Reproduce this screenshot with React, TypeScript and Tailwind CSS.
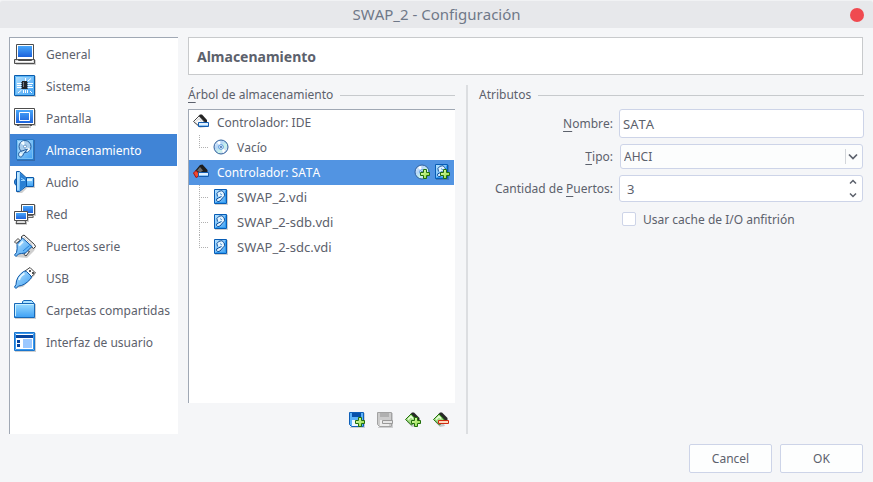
import { useId, useState } from "react";
import type { ReactNode } from "react";

type IconProps = { children: ReactNode; size?: "sm" | "lg" };

function Icon({ children, size = "lg" }: IconProps) {
  return size === "lg" ? (
    <svg viewBox="0 0 24 24" className="size-6 shrink-0" aria-hidden="true">
      {children}
    </svg>
  ) : (
    <svg viewBox="0 0 16 16" className="size-4 shrink-0" aria-hidden="true">
      {children}
    </svg>
  );
}

function Gradients() {
  return (
    <svg className="absolute size-0" aria-hidden="true">
      <defs>
        <linearGradient id="screen" x1="0" y1="0" x2="0" y2="1">
          <stop offset="0" stopColor="#48a6fa" />
          <stop offset="1" stopColor="#1c62dc" />
        </linearGradient>
        <linearGradient id="light" x1="0" y1="0" x2="1" y2="1">
          <stop offset="0" stopColor="#b9e4ff" />
          <stop offset="1" stopColor="#3b9df2" />
        </linearGradient>
        <linearGradient id="folder" x1="0" y1="0" x2="0" y2="1">
          <stop offset="0" stopColor="#9cdcff" />
          <stop offset="1" stopColor="#3da0f5" />
        </linearGradient>
        <linearGradient id="plus" x1="0" y1="0" x2="1" y2="1">
          <stop offset="0" stopColor="#e9ffb8" />
          <stop offset="1" stopColor="#86d83a" />
        </linearGradient>
        <linearGradient id="disc" x1="0" y1="0" x2="1" y2="1">
          <stop offset="0" stopColor="#f2f8ff" />
          <stop offset="0.35" stopColor="#b5d5f7" />
          <stop offset="0.6" stopColor="#c8f3ea" />
          <stop offset="1" stopColor="#d8c9fb" />
        </linearGradient>
      </defs>
    </svg>
  );
}

const GeneralIcon = () => (
  <Icon>
    <path d="M4 18H23V23H3" fill="#00000030" />
    <path d="M3.5 2.5H20.5V17.5H3.5Z" fill="#fff" stroke="#4d4d4d" />
    <path d="M5 4H19V15H5Z" fill="url(#screen)" />
    <path d="M1.5 17.5H4.5L5.5 18.5H18.5L19.5 17.5H21.5V21.5H1.5Z" fill="#d7d7d7" stroke="#4d4d4d" />
    <path d="M3 19.5H20" stroke="#fff" />
  </Icon>
);

const SystemIcon = () => (
  <Icon>
    <path d="M2 2H23V23H2Z" fill="#00000030" />
    <path d="M1.5 1.5H21.5V21.5H1.5Z" fill="url(#light)" stroke="#0a5cad" />
    <path d="M2.5 2.5H20.5V20.5H2.5Z" fill="none" stroke="#5bb6f7" />
    <path
      d="M12.5 4V7M15 7L18 4.5M4 9.5H8M4 11.5H8M4 13.5H8M15 9.5H20M15 11.5H19M15 13.5H20M5 19L8.5 16M10.5 16V19M12.5 16V19M14.5 16V19M17 17L19 19"
      fill="none"
      stroke="#fff"
    />
    <path d="M9 7H14V15H9Z" fill="#20242a" />
    <path d="M10 8H11V13H10Z" fill="#747b84" />
    <path d="M8.5 8V15M14.5 8V15" stroke="#4d555e" strokeDasharray="1 1" />
  </Icon>
);

const DisplayIcon = () => (
  <Icon>
    <path d="M2 4H23V20H18V22H6V20H2Z" fill="#00000030" />
    <path d="M1.5 2.5H21.5V18.5H1.5Z" fill="#fff" stroke="#4d4d4d" />
    <path d="M3 4H20V17H3Z" fill="url(#screen)" />
    <path d="M6.5 6.5H16.5V14.5H6.5Z" fill="none" stroke="#fff" />
    <path d="M4 19.5H19M7 21H16" fill="none" stroke="#555" />
    <path d="M6 20H17" stroke="#eee" />
  </Icon>
);

const StorageIcon = () => (
  <Icon>
    <path d="M4 2H22V23H4Z" fill="#00000030" />
    <path d="M3.5 1.5H20.5V21.5H3.5Z" fill="url(#light)" stroke="#2679c8" />
    <path d="M4.5 2.5H19.5V20.5H4.5Z" fill="none" stroke="#79c0f4" />
    <circle cx="12" cy="8.5" r="6" fill="#a9cdec" stroke="#245c9c" />
    <path d="M12 8.5L7.5 5A6 6 0 0 1 11 3ZM12 8.5L17.3 11A6 6 0 0 1 14 14Z" fill="#f2fbff" />
    <circle cx="12" cy="8.5" r="1.5" fill="#fff" stroke="#3979b9" strokeWidth="0.7" />
    <path d="M14.5 11L9 13C7 13.5 5.5 14.5 5.5 16.3C5.5 19 8 20 9.5 18C10.5 16.5 10.5 15.5 12 14Z" fill="#c5e6fb" stroke="#245c9c" />
    <circle cx="7.8" cy="16.5" r="1" fill="#fff" />
  </Icon>
);

const AudioIcon = () => (
  <Icon>
    <path d="M4 2L9 3L14 8L22 8V18L14 18L9 23H4Z" fill="#00000030" />
    <path d="M3.5 8.5Q1.5 9 1.5 12Q1.5 15 3.5 15.5" fill="#318ae0" stroke="#0b57a8" />
    <path d="M12.5 7.5H20.5V16.5H12.5Z" fill="url(#folder)" stroke="#0b57a8" />
    <path d="M14 9H19V11H14Z" fill="#dff3ff" />
    <path d="M3.5 1.5H6.5L13.5 8V16L6.5 21.5H3.5Z" fill="url(#light)" stroke="#0b57a8" />
    <path d="M7 2.5L13 8.5V15.5L7 20.5Z" fill="#2a80d4" />
    <path d="M5 3V20" stroke="#d7f2ff" />
    <path d="M8 8L12 10.5M8 10.5H12" stroke="#9cd6ff" />
  </Icon>
);

const NetworkIcon = () => (
  <Icon>
    <path d="M9 3H23V14H21V16H12ZM2 11H16V20H14V23H3Z" fill="#00000030" />
    <path d="M8.5 2.5H21.5V12.5H8.5Z" fill="#fff" stroke="#4d4d4d" />
    <path d="M10 4H20V11H10Z" fill="url(#screen)" />
    <path d="M15 13.5H20V15.5H15" fill="#ddd" stroke="#666" />
    <path d="M1.5 9.5H14.5V18.5H1.5Z" fill="#fff" stroke="#4d4d4d" />
    <path d="M3 11H13V17H3Z" fill="url(#screen)" />
    <path d="M4 18.5H12L13 21.5H3Z" fill="#ddd" stroke="#4d4d4d" />
  </Icon>
);

const SerialIcon = () => (
  <Icon>
    <path d="M3 23L4 13L12 5L23 13L21 17L14 24Z" fill="#00000030" />
    <path d="M7 6.5L3 9.5L1.5 8L5 4.5Z" fill="#f3f3f3" stroke="#444" />
    <path d="M16.5 17.5L13 22L11 20.5L14 16.5Z" fill="#f3f3f3" stroke="#444" />
    <path d="M8.5 2.5L11 1L21.5 10.5L22.5 12.5L20.5 14.5L8.5 4.5Z" fill="#f8f8f8" stroke="#333" />
    <path d="M11 3.5L20 11.5" stroke="#999" strokeDasharray="1 1" />
    <path
      d="M9.5 4L19 12.5L12.5 19Q8 19.5 5.5 20L3 22.5L1.5 21L3.5 18.5Q4.5 15 4 10.5Z"
      fill="url(#light)"
      stroke="#0b57a8"
      strokeLinejoin="round"
    />
    <path d="M6 11.5L10 7.5" stroke="#e4f6ff" strokeWidth="2" />
    <path d="M10 17L16.5 11.5" stroke="#237fd5" />
  </Icon>
);

const UsbIcon = () => (
  <Icon>
    <path d="M3 22L6 15L16 6L22 9L10 21Z" fill="#00000030" />
    <path d="M12 5L17 1.5L22.5 7L18 11Z" fill="#fff" stroke="#444" strokeLinejoin="round" />
    <path d="M16 4H18V6H16ZM19 6H21V8H19Z" fill="#555" />
    <path
      d="M10.5 5.5Q12 4.5 13.5 5.5L18 10Q19 11.5 17.5 13Q11 20 5.5 20L3 22.5L1.5 21L3 18.5Q3 11 10.5 5.5Z"
      fill="url(#light)"
      stroke="#0b57a8"
    />
    <path d="M6 14Q7 10 11.5 7.5" fill="none" stroke="#e4f6ff" strokeWidth="2" />
  </Icon>
);

const FolderIcon = () => (
  <Icon>
    <path d="M2 6H23V21H2Z" fill="#00000030" />
    <path d="M9.5 6V3.5L11 2.5H18.5L20.5 4.5V7" fill="#aee3ff" stroke="#1668b8" />
    <path d="M1.5 5.5H21.5V19.5H1.5Z" fill="url(#folder)" stroke="#1668b8" />
    <path d="M2.5 18V6.5H20.5" fill="none" stroke="#caf0ff" />
  </Icon>
);

const InterfaceIcon = () => (
  <Icon>
    <path d="M2 3H23V22H2Z" fill="#00000030" />
    <path d="M1.5 2.5H21.5V20.5H1.5Z" fill="#fff" stroke="#1976cf" />
    <path d="M2.5 3.5H20.5V19.5H2.5Z" fill="none" stroke="#3b98ee" />
    <path d="M3 5H20V8H3Z" fill="#0746a0" />
    <path d="M4 10H7V13H4ZM4 14H7V17H4Z" fill="#0746a0" />
    <path d="M10 9H19V18H10Z" fill="#9bc8ff" />
  </Icon>
);

const IdeIcon = () => (
  <Icon size="sm">
    <path d="M1 9L7 14L13 13L8 8Z" fill="#00000030" />
    <path d="M5.5 2L7 0.5H9L14 6V8.5H11Z" fill="#242424" />
    <path d="M0.5 7.5L6 2L11.5 8L6.5 12.5Z" fill="#fafafa" stroke="#4a4a4a" />
    <path d="M3 7.5L6 4.5L8.5 7.5" fill="none" stroke="#d0d0d0" />
    <path d="M5.5 8.5H15.5V12.5H5.5Z" fill="#dff0ff" stroke="#145cae" />
    <path d="M6 11.5H15" stroke="#8cc4f5" />
  </Icon>
);

const SataIcon = () => (
  <Icon size="sm">
    <path d="M2 7L7 1L9.5 0.5L14.5 6V9H8L6 11.5Z" fill="#1d1d1d" />
    <path d="M4 6.5L7 3L10 6.5L7 8.5Z" fill="#6c6c6c" />
    <path d="M0.5 9L3 6.5L6.5 10L5 12.5L3 13.5Z" fill="#f0492f" stroke="#a01313" />
    <path d="M5.5 8.5H15.5V12.5H5.5Z" fill="#dff0ff" stroke="#145cae" />
    <path d="M6 11.5H15" stroke="#8cc4f5" />
  </Icon>
);

const PlusMark = () => (
  <path
    d="M9.5 5.5H12.5V8.5H15.5V11.5H12.5V14.5H9.5V11.5H6.5V8.5H9.5Z"
    fill="url(#plus)"
    stroke="#216e0c"
  />
);

const DiscShape = () => (
  <>
    <circle cx="8" cy="8" r="7" fill="url(#disc)" stroke="#2f5f9c" />
    <path d="M8 8L4 3.5L7 2ZM8 8L12.5 11.5L10 14Z" fill="#fff" />
    <circle cx="8" cy="8" r="2.3" fill="#fff" stroke="#4d8fdc" />
    <circle cx="8" cy="8" r="0.9" fill="#1b56a0" />
  </>
);

const DiskShape = () => (
  <>
    <path d="M2 15.5H14.5V1" fill="none" stroke="#00000030" />
    <path d="M1.5 0.5H13.5V14.5H1.5Z" fill="url(#light)" stroke="#075cb5" />
    <path d="M2.5 13.5H12.5V1.5" fill="none" stroke="#2f9bf0" />
    <path
      d="M4.5 7.5A3.8 3.8 0 1 1 9.5 9L7 12Q4.5 13.5 3.5 11.5Q3 9.5 5.5 9L8.5 7.5"
      fill="#e3f4ff"
      stroke="#0c4e9b"
    />
    <path d="M7 4.5L9 6" stroke="#4d94d8" />
  </>
);

const SaveShape = ({ muted }: { muted?: boolean }) => (
  <>
    <path d="M1 15.5H15.5V1" fill="none" stroke="#00000028" />
    <path
      d="M0.5 0.5H14.5V14.5H2.5L0.5 12.5Z"
      fill={muted ? "#cccccc" : "#5ab2f8"}
      stroke={muted ? "#a2a2a2" : "#0f5fb8"}
    />
    <path d="M3 1H12V5H3Z" fill={muted ? "#b0b0b0" : "#0750a8"} />
    <path d="M3 8H12V14H3Z" fill={muted ? "#ededed" : "#eef7ff"} />
  </>
);

const ControllerShape = () => (
  <>
    <path d="M2 10L7 15L12 14L9 8Z" fill="#00000030" />
    <path d="M5.5 2L7 0.5H9L14.5 6V9H11Z" fill="#282828" />
    <path d="M0.5 7.5L6 2L11.5 8L6.5 13Z" fill="#a5dd86" stroke="#216e0c" />
    <path d="M3 7.5L6 4.5L8 6.5" fill="none" stroke="#e8ffda" strokeWidth="1.5" />
  </>
);

const categories = [
  { label: "General", icon: <GeneralIcon /> },
  { label: "Sistema", icon: <SystemIcon /> },
  { label: "Pantalla", icon: <DisplayIcon /> },
  { label: "Almacenamiento", icon: <StorageIcon /> },
  { label: "Audio", icon: <AudioIcon /> },
  { label: "Red", icon: <NetworkIcon /> },
  { label: "Puertos serie", icon: <SerialIcon /> },
  { label: "USB", icon: <UsbIcon /> },
  { label: "Carpetas compartidas", icon: <FolderIcon /> },
  { label: "Interfaz de usuario", icon: <InterfaceIcon /> },
];

function Legend({ children }: { children: ReactNode }) {
  return (
    <div className="flex h-5 items-center gap-[7px]">
      <h2>{children}</h2>
      <span className="h-px flex-1 bg-[#c7cacd]" />
    </div>
  );
}

function Key({ children }: { children: ReactNode }) {
  return <span className="underline underline-offset-[3px]">{children}</span>;
}

function Caption({ children }: { children: ReactNode }) {
  return <span className="flex-1 pt-[2px] text-left">{children}</span>;
}

function Branch({ last }: { last?: boolean }) {
  return (
    <svg viewBox="0 0 12 25" className="h-[25px] w-3 shrink-0" aria-hidden="true">
      <path d={last ? "M0.5 0V13" : "M0.5 0V25"} stroke="#b0b0b0" strokeDasharray="1 1" />
      <path d="M2 12.5H10" stroke="#b0b0b0" strokeDasharray="1 1" />
    </svg>
  );
}

function TreeLeaf({ icon, children, last }: { icon: ReactNode; children: ReactNode; last?: boolean }) {
  return (
    <li className="flex h-[25px] pl-[10px]">
      <Branch last={last} />
      <span className="flex items-center gap-2 pb-px pl-[2px]">
        <Icon size="sm">{icon}</Icon>
        {children}
      </span>
    </li>
  );
}

function DiskLeaf({ name, last }: { name: string; last?: boolean }) {
  return (
    <TreeLeaf icon={<DiskShape />} last={last}>
      <span className="text-[13px]">{name}</span>
    </TreeLeaf>
  );
}

function StorageTree() {
  return (
    <ul className="flex-1 border-l border-t border-[#a0a8b4] bg-white">
      <li>
        <div className="flex h-[25px] items-center gap-2 pb-px pl-1">
          <IdeIcon />
          <Caption>Controlador: IDE</Caption>
        </div>
        <ul>
          <TreeLeaf icon={<DiscShape />} last>
            <Caption>Vacío</Caption>
          </TreeLeaf>
        </ul>
      </li>
      <li>
        <div className="mr-px flex h-[25px] items-center gap-2 bg-[#5294e2] pb-px pl-1 pr-1 text-white">
          <SataIcon />
          <Caption>Controlador: SATA</Caption>
          <span className="flex gap-1">
            <button type="button" aria-label="Añadir unidad óptica">
              <Icon size="sm">
                <DiscShape />
                <PlusMark />
              </Icon>
            </button>
            <button type="button" aria-label="Añadir disco duro">
              <Icon size="sm">
                <DiskShape />
                <PlusMark />
              </Icon>
            </button>
          </span>
        </div>
        <ul>
          <DiskLeaf name="SWAP_2.vdi" />
          <DiskLeaf name="SWAP_2-sdb.vdi" />
          <DiskLeaf name="SWAP_2-sdc.vdi" last />
        </ul>
      </li>
    </ul>
  );
}

function StorageToolbar() {
  return (
    <div className="flex h-[31px] items-center justify-end gap-3 pr-[6px] pt-[3px]">
      <button type="button" aria-label="Añadir conexión">
        <Icon size="sm">
          <SaveShape />
          <PlusMark />
        </Icon>
      </button>
      <button type="button" aria-label="Eliminar conexión" disabled>
        <Icon size="sm">
          <SaveShape muted />
          <path d="M5.5 8.5H15.5V11.5H5.5Z" fill="#e6e6e6" stroke="#999" />
        </Icon>
      </button>
      <button type="button" aria-label="Añadir controlador">
        <Icon size="sm">
          <ControllerShape />
          <PlusMark />
        </Icon>
      </button>
      <button type="button" aria-label="Eliminar controlador">
        <Icon size="sm">
          <ControllerShape />
          <path d="M5.5 8.5H15.5V11.5H5.5Z" fill="#ffd8bc" stroke="#d0290f" />
        </Icon>
      </button>
    </div>
  );
}

function Attributes() {
  const id = useId();
  const [name, setName] = useState("SATA");
  const [ports, setPorts] = useState(3);
  return (
    <section className="-mr-px min-w-0 flex-1">
      <Legend>Atributos</Legend>
      <div className="mt-1 grid grid-cols-[134px_1fr] items-center gap-[6px]">
        <label htmlFor={`${id}-name`} className="pt-px text-right">
          <Key>N</Key>ombre:
        </label>
        <input
          id={`${id}-name`}
          value={name}
          onChange={(e) => setName(e.target.value)}
          className="h-[29px] w-full min-w-0 rounded-[3px] border border-[#cdd4e8] bg-white px-[3px] text-[13px] outline-none"
        />
        <label htmlFor={`${id}-type`} className="pt-px text-right">
          <Key>T</Key>ipo:
        </label>
        <div className="grid px-px">
          <select
            id={`${id}-type`}
            className="col-start-1 row-start-1 h-[25px] w-full appearance-none rounded-[3px] border border-[#cdd4e8] bg-[#fcfdfd] px-[3px] pt-px outline-none"
          >
            <option>AHCI</option>
          </select>
          <span className="pointer-events-none col-start-1 row-start-1 mr-[5px] flex items-center self-center justify-self-end border-l border-[#d3d6da] pl-[2px]">
            <svg viewBox="0 0 10 15" className="h-[15px] w-[10px]" aria-hidden="true">
              <path d="M1 5.5L5 9.5L9 5.5" fill="none" stroke="#5c616c" strokeWidth="1.7" />
            </svg>
          </span>
        </div>
        <label htmlFor={`${id}-ports`} className="pt-px text-right">
          Cantidad de <Key>P</Key>uertos:
        </label>
        <div className="mr-px flex h-[27px] rounded-[3px] border border-[#cdd4e8] bg-white">
          <input
            id={`${id}-ports`}
            inputMode="numeric"
            value={ports}
            onChange={(e) => setPorts(Number(e.target.value) || 0)}
            className="min-w-0 flex-1 bg-transparent pl-[7px] text-[13px] outline-none"
          />
          <span className="flex w-[18px] flex-col">
            <button
              type="button"
              aria-label="Aumentar"
              onClick={() => setPorts(ports + 1)}
              className="flex flex-1 items-center justify-center"
            >
              <svg viewBox="0 0 8 6" className="h-[6px] w-2" aria-hidden="true">
                <path d="M1 4.5L4 1.5L7 4.5" fill="none" stroke="#5c616c" strokeWidth="1.5" />
              </svg>
            </button>
            <button
              type="button"
              aria-label="Reducir"
              onClick={() => setPorts(Math.max(1, ports - 1))}
              className="flex flex-1 items-center justify-center"
            >
              <svg viewBox="0 0 8 6" className="h-[6px] w-2" aria-hidden="true">
                <path d="M1 1.5L4 4.5L7 1.5" fill="none" stroke="#5c616c" strokeWidth="1.5" />
              </svg>
            </button>
          </span>
        </div>
        <label className="col-start-2 flex h-[22px] items-center gap-[7px] pl-[3px]">
          <input
            type="checkbox"
            className="size-[14px] appearance-none rounded-[2px] border border-[#cdd4e8] bg-white checked:bg-[#5294e2]"
          />
          <Caption>Usar cache de I/O anfitrión</Caption>
        </label>
      </div>
    </section>
  );
}

export default function App() {
  const [selected, setSelected] = useState("Almacenamiento");
  return (
    <div className="flex min-h-screen flex-col bg-[#f5f6f8] font-['Noto_Sans',sans-serif] text-[12px] leading-5 text-[#5c616c] [font-kerning:none]">
      <Gradients />
      <header className="grid h-7 grid-cols-[1fr_auto_1fr] items-center rounded-t-[3px] border-t border-[#f1f2f4] bg-[#e7e8eb] px-[9px] text-[#6f7888]">
        <h1 className="col-start-2 pb-[2px] text-[15px]">SWAP_2 - Configuración</h1>
        <button type="button" aria-label="Cerrar" className="size-[14px] justify-self-end rounded-full bg-[#f04a50]" />
      </header>

      <div className="flex flex-1 gap-[10px] pl-[9px] pr-[10px] pt-[9px]">
        <nav className="w-[169px] shrink-0 border-l border-t border-[#a0a8b4] bg-white pr-px">
          {categories.map(({ label, icon }) => (
            <button
              key={label}
              type="button"
              onClick={() => setSelected(label)}
              className={
                label === selected
                  ? "flex h-8 w-full items-center gap-[9px] whitespace-nowrap bg-[#4084d6] pl-[3px] text-white"
                  : "flex h-8 w-full items-center gap-[9px] whitespace-nowrap pl-[3px]"
              }
            >
              {icon}
              <Caption>{label}</Caption>
            </button>
          ))}
        </nav>

        <main className="flex min-w-0 flex-1 flex-col">
          <div className="flex h-[38px] items-center border border-[#c8cacc] bg-white px-2 text-[14px] font-bold">
            <Caption>{selected}</Caption>
          </div>
          <div className="mt-[10px] flex flex-1">
            <section className="flex w-[267px] shrink-0 flex-col">
              <Legend>
                <Key>Á</Key>rbol de almacenamiento
              </Legend>
              <div className="mt-1 flex flex-1 flex-col">
                <StorageTree />
                <StorageToolbar />
              </div>
            </section>
            <div className="mx-[11px] w-[2px] bg-[#dcdee1]" />
            <Attributes />
          </div>
        </main>
      </div>

      <footer className="flex justify-end gap-2 pb-[9px] pr-[10px] pt-[10px]">
        <button type="button" className="h-[29px] w-[83px] rounded-[2px] border border-[#cdd4e8] bg-[#fdfefe]">
          Cancel
        </button>
        <button type="button" className="h-[29px] w-[83px] rounded-[2px] border border-[#cdd4e8] bg-[#fdfefe]">
          OK
        </button>
      </footer>
    </div>
  );
}
